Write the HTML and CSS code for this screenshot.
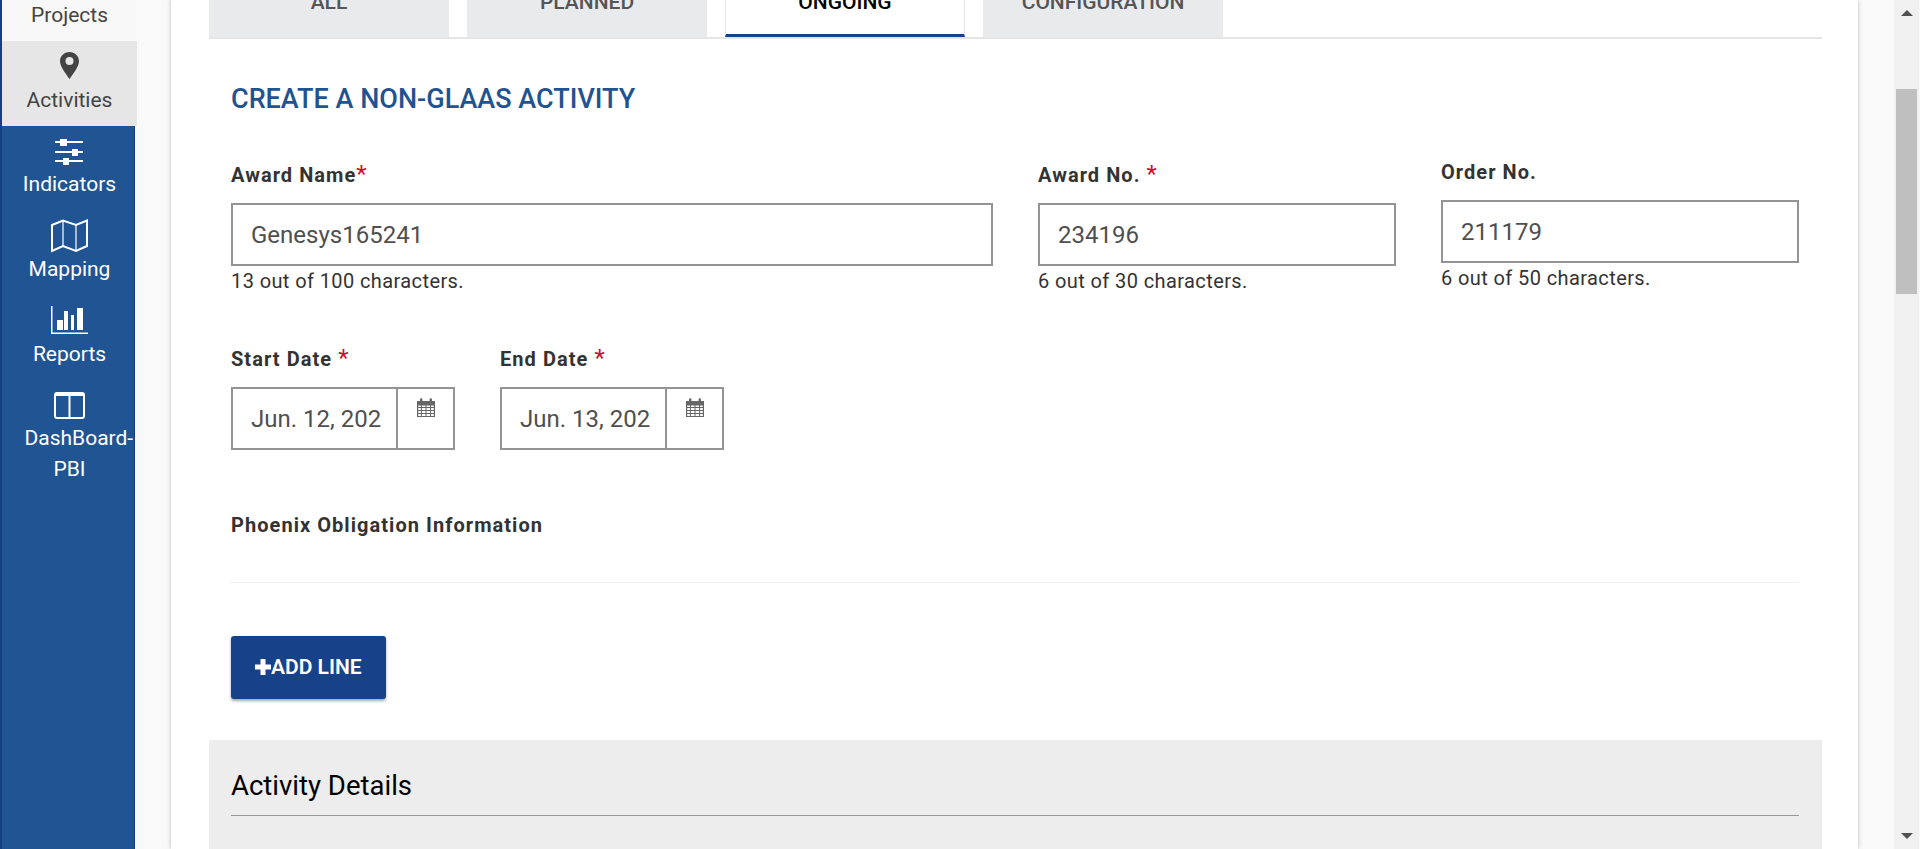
FILE: index.html
```html
<!DOCTYPE html>
<html lang="en">
<head>
    <meta charset="UTF-8">
    <meta name="viewport" content="width=device-width, initial-scale=1.0">
    <title>Create a Non-GLAAS Activity</title>
    <link rel="stylesheet" href="styles.css">
</head>
<body>
    <!-- Side navigation -->
    <nav class="sidebar">
        <a class="nav-item nav-projects"><span class="nav-label">Projects</span></a>
        <a class="nav-item nav-active">
            <svg class="nav-icon" width="40" height="30" viewBox="0 0 40 30">
                <path fill="#444" fill-rule="evenodd" d="M21.500 1c-5.200 0-9.500 4-9.500 9.200 0 5.300 6.400 13.300 9.500 17.800 3.100-4.500 9.500-12.500 9.500-17.800 0-5.200-4.300-9.200-9.500-9.200zm0 5a4 4 0 1 1 0 8 4 4 0 0 1 0-8z"/>
            </svg>
            <span class="nav-label">Activities</span>
        </a>
        <a class="nav-item">
            <svg class="nav-icon" width="40" height="30" viewBox="0 0 40 30" fill="#fff">
                <rect x="7" y="5" width="28" height="2"/><rect x="12" y="3" width="7" height="7"/>
                <rect x="7" y="15" width="28" height="2"/><rect x="24" y="13" width="6" height="7"/>
                <rect x="7" y="24" width="28" height="2"/><rect x="15" y="22" width="6" height="7"/>
            </svg>
            <span class="nav-label">Indicators</span>
        </a>
        <a class="nav-item">
            <svg class="nav-icon" width="40" height="30" viewBox="0 0 40 30" fill="none" stroke="#fff" stroke-width="2">
                <path d="M4 4 15 -.5 28 4 39 -.5V25L28 30 15 25 4 30Z"/>
                <path d="M15 -.5V25M28 4V30" stroke-width="1.200"/>
            </svg>
            <span class="nav-label">Mapping</span>
        </a>
        <a class="nav-item">
            <svg class="nav-icon" width="40" height="30" viewBox="0 0 40 30" fill="#fff">
                <rect x="3" y="0" width="1.500" height="28"/><rect x="3" y="26.500" width="37" height="1.500"/>
                <rect x="9" y="14" width="6" height="10"/><rect x="16" y="5" width="4" height="19"/>
                <rect x="23" y="9" width="3" height="15"/><rect x="29" y="2" width="6" height="22"/>
            </svg>
            <span class="nav-label">Reports</span>
        </a>
        <a class="nav-item nav-tall">
            <svg class="nav-icon" width="40" height="30" viewBox="0 0 40 30" fill="none" stroke="#fff">
                <rect x="7" y="2" width="29" height="25" rx="2" stroke-width="2"/>
                <path d="M21.500 2V27" stroke-width="2"/>
                <path d="M7 3.500H36" stroke-width="3"/>
            </svg>
            <span class="nav-label">DashBoard-<br>PBI</span>
        </a>
    </nav>

    <main class="card">
        <div class="tabs">
            <a class="tab">ALL</a>
            <a class="tab">PLANNED</a>
            <a class="tab tab-active">ONGOING</a>
            <a class="tab">CONFIGURATION</a>
        </div>

        <form class="activity-form">
            <h2 class="form-title">CREATE A NON-GLAAS ACTIVITY</h2>

            <div class="field-row">
                <div class="field field-name">
                    <label class="field-label">Award Name<span class="req">*</span></label>
                    <input class="text-input" type="text" value="Genesys165241">
                    <div class="hint">13 out of 100 characters.</div>
                </div>
                <div class="field field-no">
                    <label class="field-label">Award No. <span class="req">*</span></label>
                    <input class="text-input" type="text" value="234196">
                    <div class="hint">6 out of 30 characters.</div>
                </div>
                <div class="field field-order">
                    <label class="field-label">Order No.</label>
                    <input class="text-input" type="text" value="211179">
                    <div class="hint">6 out of 50 characters.</div>
                </div>
            </div>

            <div class="date-row">
                <div class="field">
                    <label class="field-label">Start Date <span class="req">*</span></label>
                    <div class="date-box">
                        <input class="date-input" type="text" value="Jun. 12, 2021">
                        <span class="date-btn">
                            <svg width="20" height="20" viewBox="0 0 20 20">
                                <use href="#cal"/>
                            </svg>
                        </span>
                    </div>
                </div>
                <div class="field">
                    <label class="field-label">End Date <span class="req">*</span></label>
                    <div class="date-box">
                        <input class="date-input" type="text" value="Jun. 13, 2021">
                        <span class="date-btn">
                            <svg width="20" height="20" viewBox="0 0 20 20">
                                <use href="#cal"/>
                            </svg>
                        </span>
                    </div>
                </div>
            </div>

            <div class="section-label">Phoenix Obligation Information</div>
            <hr class="section-rule">

            <button class="add-btn" type="button">
                <svg width="16" height="16" viewBox="0 0 16 16" fill="#fff"><path d="M5.500 0h5v5.500H16v5h-5.500V16h-5v-5.500H0v-5h5.500z"/></svg>ADD LINE
            </button>
        </form>

        <section class="details">
            <h3 class="details-title">Activity Details</h3>
        </section>
    </main>

    <div class="scrollbar">
        <span class="arrow arrow-up"></span>
        <span class="thumb"></span>
        <span class="arrow arrow-down"></span>
    </div>

    <svg width="0" height="0" class="defs">
        <symbol id="cal" viewBox="0 0 20 20">
            <path fill="#666" fill-rule="evenodd" d="M1 3h3V1.500a1.200 1.200 0 0 1 2.400 0V3h7.200V1.500a1.200 1.200 0 0 1 2.400 0V3h3v16H1zM2.200 7.500V9h2.700V7.500zm3.700 0V9h3.600V7.500zm4.600 0V9h3.600V7.500zm4.600 0V9h2.700V7.500zM2.200 10v2h2.700v-2zm3.700 0v2h3.600v-2zm4.600 0v2h3.600v-2zm4.600 0v2h2.700v-2zM2.200 13v2h2.700v-2zm3.700 0v2h3.600v-2zm4.600 0v2h3.600v-2zm4.600 0v2h2.700v-2zM2.200 16v2h2.700v-2zm3.700 0v2h3.600v-2zm4.600 0v2h3.600v-2zm4.600 0v2h2.700v-2z"/>
        </symbol>
    </svg>
</body>
</html>
```

FILE: styles.css
```css
html, body { height: 100%; }
body {
    margin: 0;
    height: 849px;
    overflow: hidden;
    display: flex;
    background: #f9f9f9;
    font-family: Roboto, "Liberation Sans", sans-serif;
    color: #333;
}
.defs { position: absolute; }

/* Side navigation */
.sidebar {
    width: 132px;
    flex: none;
    background: #205493;
    border-left: 2px solid #163f82;
    border-right: 1px solid #163f82;
    box-sizing: content-box;
}
.nav-item {
    display: flex;
    flex-direction: column;
    align-items: center;
    width: 135px;
    height: 85px;
    color: #fff;
    font-size: 21px;
    line-height: 32px;
    text-align: center;
}
.nav-icon { display: block; flex: none; margin: 10px 0 2px -3px; overflow: visible; }
.nav-label { display: block; }
.nav-projects {
    height: 41px;
    background: #f8f8f8;
    color: #444;
    justify-content: flex-end;
    padding-bottom: 10px;
    box-sizing: border-box;
}
.nav-active { background: #e6e6e6; color: #444; }
.nav-active .nav-label { padding-top: 1px; }
.nav-tall { line-height: 31px; }
.nav-tall .nav-label { width: 90px; }

/* Main card */
.card {
    width: 1687px;
    flex: none;
    margin-left: 36px;
    background: #fff;
    box-shadow: 0 0 4px rgba(0, 0, 0, 0.25);
    padding: 0 36px 0 38px;
    box-sizing: border-box;
    height: 849px;
    overflow: hidden;
}
.tabs {
    display: flex;
    gap: 18px;
    height: 39px;
    box-sizing: border-box;
    border-bottom: 2px solid #e5e5e5;
}
.tab {
    width: 240px;
    height: 37px;
    background: #e9eaec;
    color: #555;
    font-size: 21px;
    font-weight: 500;
    line-height: 4px;
    text-align: center;
}
.tab-active {
    background: #fff;
    color: #000;
    box-sizing: border-box;
    border-left: 1px solid #e5e5e5;
    border-right: 1px solid #e5e5e5;
    border-bottom: 3px solid #174189;
}

.activity-form { padding: 0 23px 0 22px; }
.form-title {
    margin: 44px 0 0;
    color: #1f5391;
    font-size: 27px;
    font-weight: 500;
    line-height: 32px;
}
.field-row { display: flex; margin-top: 46px; align-items: flex-start; }
.field-name { width: 762px; margin-right: 45px; }
.field-no { width: 358px; margin-right: 45px; }
.field-order { width: 358px; margin-top: -3px; }
.field-label {
    display: block;
    height: 28px;
    font-size: 20px;
    font-weight: 700;
    line-height: 28px;
    letter-spacing: 1.050px;
    margin-bottom: 14px;
}
.req { color: #c8102e; font-size: 24px; font-weight: 400; line-height: 20px; }
.text-input, .date-input {
    display: block;
    width: 100%;
    box-sizing: border-box;
    height: 63px;
    padding: 0 18px;
    border: 2px solid #949494;
    border-radius: 0;
    outline: none;
    background: #fff;
    color: #4f4f4f;
    font-family: inherit;
    font-size: 24px;
    font-weight: 400;
}
.hint { font-size: 20px; line-height: 30px; color: #333; letter-spacing: 0.4px; }

.date-row { display: flex; gap: 45px; margin-top: 49px; }
.date-box {
    display: flex;
    width: 224px;
    height: 63px;
    box-sizing: border-box;
    border: 2px solid #949494;
}
.date-input { width: 163px; height: 59px; border: 0; flex: none; padding-right: 15px; }
.date-btn {
    flex: 1;
    border-left: 2px solid #949494;
    display: flex;
    justify-content: center;
    padding-top: 9px;
    box-sizing: border-box;
}
.section-label {
    margin-top: 61px;
    font-size: 20px;
    font-weight: 700;
    line-height: 28px;
    letter-spacing: 1.050px;
}
.section-rule { margin: 43px 0 0; border: 0; border-top: 1px solid #eee; }
.add-btn {
    display: flex;
    align-items: center;
    height: 63px;
    margin-top: 53px;
    padding: 0 24px 2px;
    border: 0;
    border-radius: 3px;
    background: #174189;
    color: #fff;
    font-family: inherit;
    font-size: 21px;
    font-weight: 600;
    box-shadow: 0 2px 3px rgba(0, 0, 0, 0.35);
}
.details {
    margin-top: 41px;
    height: 200px;
    background: #ededed;
    padding: 0 23px 0 22px;
}
.details-title {
    margin: 0;
    padding: 28px 0 11px;
    border-bottom: 1px solid #999;
    color: #000;
    font-size: 27.500px;
    font-weight: 400;
    line-height: 36px;
}

/* Fake window scrollbar */
.scrollbar {
    width: 25px;
    flex: none;
    margin-left: 36px;
    background: #f0f0f0;
    display: flex;
    flex-direction: column;
    align-items: center;
    height: 849px;
}
.thumb { width: 21px; height: 205px; margin-top: 73px; background: #bfbfbf; }
.arrow { width: 0; height: 0; border-left: 6px solid transparent; border-right: 6px solid transparent; }
.arrow-up { margin-top: 10px; border-bottom: 6px solid #505050; }
.arrow-down { margin-top: auto; margin-bottom: 10px; border-top: 6px solid #505050; }
```
